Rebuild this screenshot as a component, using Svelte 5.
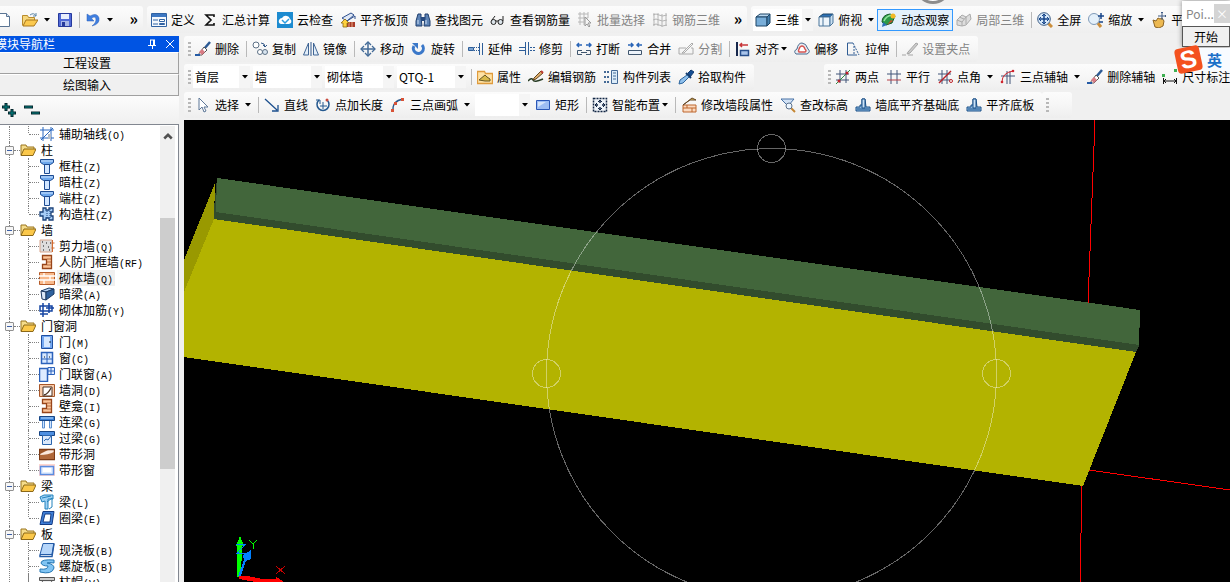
<script lang="ts">
  const icons: Record<string, string> = {
    doc: '<path d="M3.500 1.500h8l3 3v10h-11z" fill="#fff" stroke="#5b7594"/><path d="M11.500 1.500v3h3" fill="#dce8f5" stroke="#5b7594"/>',
    open: '<path d="M0.500 13.500v-10h5l1 2h6v3" fill="#f6d77c" stroke="#b98b2c"/><path d="M1 14l3-6h12l-4 6z" fill="#fbc94f" stroke="#a8771d"/><path d="M8 3q4-3 6 1m0-3v3h-3" fill="none" stroke="#5d87a8"/>',
    save: '<path d="M1.500 1.500h13v13h-13z" fill="#5069d6" stroke="#26399c"/><path d="M4 2h8v5H4z" fill="#e9effc"/><path d="M4 9h8v5H4z" fill="#a8b7e8"/><path d="M5 10h3v4H5z" fill="#26399c"/>',
    undo: '<path d="M2 2v7h7L6.500 6.500Q11 3 11 8q0 3-4 6 8-2 7-8-2-6-9-2z" fill="#3f7fe0" stroke="#2b5fb8" stroke-width=".5"/>',
    define: '<path d="M0.500 1.500h15v13h-15z" fill="#f4f8fd" stroke="#2f62a3"/><path d="M1 2h14v3H1z" fill="#3d77c2"/><path d="M2 8h5m-5 4h5" stroke="#2f62a3"/><path d="M8.500 7.500h5v2h-5zm0 4h5v1h-5z" fill="#fff" stroke="#2f62a3"/>',
    sigma: '<path d="M12 5V3H4l5 5-5 5h8v-2" fill="none" stroke="#111" stroke-width="1.600"/>',
    cloud: '<path d="M0 0h16v16H0z" fill="#1d8bd0"/><path d="M4 12q-3-1-2-4 1-2 3-2 2-3 5-2 2 0 3 3 2 1 1 4l-2 1z" fill="#fff"/><path d="M5 8l3 3 4-4" fill="none" stroke="#2c9de0" stroke-width="1.500"/>',
    slabtop: '<path d="M2 6l9-5 3 2-7 6z" fill="#dfe8f6" stroke="#2d4f8e"/><path d="M7 9l8-5v3" fill="none" stroke="#2d4f8e"/><path d="M7 10h8v5H7z" fill="#a83a28"/><path d="M9 10v5m3-5v5" stroke="#f8c49c" stroke-width=".8"/><path d="M5 7l4 4H7v4H3v-4H1z" fill="#ffd23e" stroke="#8b6912" stroke-width=".8"/>',
    find: '<path d="M3 2h3v4l1 8H1V9zm7 0h3l2 7v5H9l1-8z" fill="#5e84b6" stroke="#203f6e"/><path d="M6 5h4v4H6z" fill="#274a7f"/><path d="M3 8v4m8-4v4" stroke="#cfe0f5"/>',
    glasses: '<circle cx="3.500" cy="10" r="2.500" fill="#dbe4ea" stroke="#222"/><circle cx="10.500" cy="10" r="2.500" fill="#dbe4ea" stroke="#222"/><path d="M6 9h2M2 8l3-4m8 5V4" fill="none" stroke="#222"/>',
    batch: '<path d="M1 2h10M1 6h10M1 10h6M3 0v13M7 0v13M11 0v6" stroke="#b8b8b8"/><path d="M8 5v9l2-2 2 3 1-1-2-3h3z" fill="#f5f5f5" stroke="#999"/>',
    rebar3d: '<path d="M1 3q3-2 6 0t8 0M1 8q3-2 6 0t8 0M1 13q3-2 6 0t8 0M2 1v13M6 1v13M10 2v13M14 1v13" fill="none" stroke="#b4b4b4"/>',
    cube: '<path d="M1 5l4-3h10l-3 3z" fill="#b9d7ef" stroke="#1d4567"/><path d="M1 5h11v9H1z" fill="#79aed9" stroke="#1d4567"/><path d="M12 5l3-3v9l-3 3z" fill="#4682b0" stroke="#1d4567"/>',
    topview: '<path d="M1 5l4-3h10l-3 3z" fill="#2d71b7" stroke="#1d4567"/><path d="M1 5h11v9H1z" fill="#eef5fb" stroke="#48759b"/><path d="M12 5l3-3v9l-3 3zM5 5v9" fill="#cadff0" stroke="#48759b"/>',
    orbit: '<path d="M1 10q0-7 8-8l5 2-3 7-6 2z" fill="#2b9a48" stroke="#165b2a"/><path d="M3 9q2-5 8-6" stroke="#8ee59c" fill="none" stroke-width="1.500"/><circle cx="12" cy="4" r="2.500" fill="#f2b928"/><path d="M1 15l5-2-4-3z" fill="#2970b8"/><path d="M6 13l6-4-2-1z" fill="#c84d28"/>',
    local3d: '<path d="M1 8l5-5 4 2 4-3 1 5-5 6-4 1-5-1z" fill="#ddd" stroke="#aaa"/><path d="M1 8l5 2 4-5m-4 5v4m4-9v7M3 5l5 2" fill="none" stroke="#aaa"/>',
    full: '<path d="M10 10l5 5" stroke="#cb8e3b" stroke-width="3"/><circle cx="7" cy="7" r="6.300" fill="#d7e9fa" stroke="#3b5b84"/><path d="M7 2v10M2 7h10" stroke="#17458a" stroke-width="1.500"/><path d="M5 4l2-2 2 2M5 10l2 2 2-2M4 5L2 7l2 2m6-4l2 2-2 2" fill="none" stroke="#17458a"/>',
    zoom: '<path d="M9 10l4 5" stroke="#cb8e3b" stroke-width="3"/><circle cx="6" cy="7" r="5.500" fill="#e4f0fa" stroke="#7f9ab8"/><path d="M13 1v6m-3-3h6m-5 6h4" stroke="#17458a" stroke-width="1.500"/>',
    pan: '<path d="M2 8l3 1 2-3 2 1 2-1 2 3-1 5-4 2-4-1z" fill="#edb951" stroke="#8c6424"/><path d="M11 0v8M7 4h8M10 1l1-1 1 1m2 2l1 1-1 1" stroke="#3e5b85" fill="none"/>',
    erase: '<path d="M15 1L9 8" stroke="#2d5a94" stroke-width="2.500"/><path d="M9 6l3 3-5 5H3z" fill="#fff" stroke="#555"/><path d="M7 8l3 3-3 3-3-3z" fill="#d97b84"/><path d="M0 14h5" stroke="#245aa5" stroke-width="2"/>',
    copy: '<circle cx="4" cy="4" r="3" fill="#fff" stroke="#5d7186"/><circle cx="8" cy="11" r="2.500" fill="#fff" stroke="#5d7186"/><circle cx="13" cy="11" r="2.500" fill="#d8e4ef" stroke="#5d7186"/><path d="M9 2q4 0 4 4m-2-2l2 2 2-2" fill="none" stroke="#355a89"/>',
    mirror: '<path d="M5.500 2v12h-5zM10.500 2v12h5z" fill="#e3eef9" stroke="#416695"/><path d="M8 1v14" stroke="#31598d"/>',
    move: '<path d="M8 1v14M1 8h14" stroke="#426a97" stroke-width="1.500"/><path d="M5 4l3-3 3 3M5 12l3 3 3-3M4 5L1 8l3 3m8-6l3 3-3 3" fill="none" stroke="#426a97" stroke-width="1.300"/>',
    rotate: '<path d="M3 5a5 5 0 1 0 8-1" fill="none" stroke="#3b78c9" stroke-width="3"/><path d="M1 2h6v6z" fill="#3b78c9"/>',
    extend: '<path d="M0.500 6.500h5v3h-5zM11.500 2v12M14.500 2v12" fill="#7fa5d0" stroke="#2e5e99"/><path d="M6 6.500h5m-5 3h5" stroke="#2e5e99" stroke-dasharray="1 1"/>',
    trim: '<path d="M0 6.500h6m0 3H0M6.500 1v13M9.500 1v13" fill="none" stroke="#2e5e99"/><path d="M11 6.500h5m-5 3h5" stroke="#2e5e99" stroke-dasharray="2 1"/>',
    breakup: '<path d="M6 4H1m2-2L1 4l2 2m7-2h5m-2-2l2 2-2 2" fill="none" stroke="#2864b7" stroke-width="1.500"/><path d="M6 9.500H1.500v4H6m4-4h4.500v4H10M5 11.500h6" fill="none" stroke="#40566e"/>',
    merge: '<path d="M1 4h5M4 2l2 2-2 2m11-2h-5m2-2l-2 2 2 2" fill="none" stroke="#2864b7" stroke-width="1.500"/><path d="M1.500 9.500h13v4h-13z" fill="#eef4fb" stroke="#40566e"/>',
    split: '<path d="M1 7h7M1 13h14V7h-2M1 7v6M4 12L14 2l1 1L6 12z" fill="none" stroke="#aaa"/>',
    align: '<path d="M2 1v14" stroke="#17284c" stroke-width="2"/><path d="M5.500 9.500h8v5h-8z" fill="#a9c4eb" stroke="#284f8c" stroke-width="1.500"/><path d="M13 4H5m2-2L5 4l2 2" fill="none" stroke="#c73538" stroke-width="1.500"/>',
    offset: '<path d="M2 13q-3-3 1-5 1-6 5-6t6 6q3 3-1 5z" fill="#e9eef4" stroke="#4a6a8e"/><path d="M5 11q-1-1 0-3 1-3 3-3t3 3q2 2 0 3z" fill="#fff" stroke="#d65552" stroke-width="1.500"/>',
    stretch: '<path d="M8 2H2.500v12H12" fill="none" stroke="#305d94"/><path d="M8 2l6 12M9 5v9" stroke="#305d94" stroke-dasharray="2 1"/>',
    grip: '<path d="M6 11l8-9 2 1-8 9-3 1zM0 14h4m2 0h5" fill="#ccc" stroke="#a5a5a5"/>',
    props: '<path d="M0.500 14.500v-12h7l1 2h7v10z" fill="#ffe2a4" stroke="#df9b3d" stroke-width="1.300"/><path d="M2 11l6-5 2 2 3 2v2H8z" fill="#d8b94a" stroke="#665623"/>',
    editbar: '<path d="M0 12q4-4 5-1t10-1" fill="none" stroke="#273b24" stroke-width="1.500"/><path d="M6 9l7-7 2 2-7 6-3 1z" fill="#dfac6b" stroke="#61461f"/><path d="M13 2l2 2" stroke="#bd3a32" stroke-width="2"/>',
    list: '<path d="M1 3h2m1 0h2M1 8h2m1 0h2M1 13h2m1 0h2" stroke="#456a96" stroke-width="2"/><path d="M8.500 1.500h6v13h-6z" fill="#dcecf9" stroke="#456a96"/><path d="M10 4h3m-3 3h3m-3 3h3" stroke="#456a96"/>',
    pick: '<path d="M10 4l3-3 3 2-4 5z" fill="#164f94" stroke="#123c70"/><path d="M8 4l5 5" stroke="#123c70" stroke-width="2"/><path d="M9 6l2 2-6 6-4 1 1-4z" fill="#8fc0ec" stroke="#2b649c"/>',
    twopoint: '<path d="M1 5h13M1 11h13M5 1v13M11 1v13" stroke="#415578"/><path d="M1 15L15 1" stroke="#2e8d42"/><circle cx="4" cy="12" r="1.500" fill="#b92229"/><circle cx="12" cy="4" r="1.500" fill="#b92229"/>',
    parallel: '<path d="M1 5h14M5 1v14M11 1v14" stroke="#415578"/><path d="M1 11h14" stroke="#b63e46"/>',
    angle: '<path d="M1 5h13M1 11h13M5 1v14M10 1v14" stroke="#415578"/><path d="M2 14L14 2" stroke="#b92229" stroke-width="1.500"/><circle cx="14" cy="12" r="1.500" fill="#fff" stroke="#b92229"/>',
    arcaxis: '<path d="M1 7h14M7 2v13M10 2v13" stroke="#415578"/><path d="M2 13q0-9 11-11" fill="none" stroke="#cf252e"/><circle cx="2" cy="13" r="1.300" fill="#cf252e"/><circle cx="13" cy="2" r="1.300" fill="#cf252e"/>',
    dimension: '<path d="M1.500 9v6M14.500 9v6M2 12h12M4 10l-2 2 2 2m8-4l2 2-2 2" fill="none" stroke="#111"/><path d="M0 5h3v3H0zM12 0h3v3h-3z" fill="#3faf52"/>',
    select: '<path d="M4 1v12l3-3 2 5 2-1-2-4h4z" fill="#fff" stroke="#5d7797"/>',
    line: '<path d="M1 2l12 11m-5 1h6V8" fill="none" stroke="#1d508e" stroke-width="1.300"/>',
    pointlen: '<path d="M4 3a6 6 0 1 0 8 0" fill="none" stroke="#24588f" stroke-width="1.500"/><path d="M1 3h4v4M8 5v7M5 9h7" fill="none" stroke="#24588f"/><circle cx="12" cy="3" r="1.500" fill="#c94b3f"/>',
    arc: '<path d="M3 14Q2 4 13 2" fill="none" stroke="#2a5688" stroke-width="1.300"/><path d="M1 12h3v3H1zM4 5h3v3H4zM11 1h3v3h-3z" fill="#d85236"/>',
    rect: '<path d="M1.500 3.500h13v9h-13z" fill="#9dbdf3" stroke="#2b57b6"/><path d="M3 5h8l-8 5z" fill="#d5e4fb"/>',
    smart: '<path d="M1.500 1.500h13v13h-13z" fill="#eef3f9" stroke="#122644" stroke-width="1.500" stroke-dasharray="2 1"/><path d="M8 3v3m0 4v3M3 8h3m4 0h3" stroke="#122644" stroke-width="1.500"/><path d="M6 5l2-2 2 2M6 11l2 2 2-2M5 6L3 8l2 2m6-4l2 2-2 2" fill="none" stroke="#122644"/>',
    brickedit: '<path d="M2 8h13v7H2z" fill="#fbdac0" stroke="#bd672e"/><path d="M2 11h13M6 8v3m5 0v4" stroke="#bd672e"/><path d="M2 8l9-7 4 2H9z" fill="#f1d06b" stroke="#654827"/>',
    elevation: '<path d="M1 2h13L8 9z" fill="#d2e2f5" stroke="#4670a5"/><path d="M11 11l4 4" stroke="#c58633" stroke-width="2"/><circle cx="9" cy="9" r="3" fill="#edf6ff" stroke="#5c718b"/>',
    base: '<path d="M1 10h4V8h2V2h3l1 8h4v4H1z" fill="#8dbae2" stroke="#184f87"/><path d="M7 2h3v9H7zM2 12h12" fill="#c9e1f6" stroke="#184f87"/>',
    folder: '<path d="M1 13V3h5l1 2h7v2" fill="#f5dc8b" stroke="#9a751e"/><path d="M1 13.500L4 7h12l-3 6.500z" fill="#fbc84a" stroke="#8c6817"/>',
    axis: '<path d="M1 4h14M1 12h14M4 1v14M12 1v14M2 14L14 2" stroke="#2866bf"/><path d="M9 8h3v5H9z" fill="#b4bdc8"/>',
    column: '<path d="M1.500 1.500h13v3l-3 2h-7l-3-2z" fill="#6ca7ec" stroke="#1c4a91"/><path d="M5.500 6.500h5v9h-5z" fill="#d2e6ff" stroke="#1c4a91"/><path d="M2 3h12" stroke="#cfe5ff"/>',
    tiecolumn: '<path d="M4 2h3v2h3V2h4v4h-2v4h2v4h-4v-2H7v2H4v-4H1V6h3z" fill="#a7cdf7" stroke="#1b4279" stroke-width="1.300"/><path d="M8 5v7M11 3v10" stroke="#1b4279" stroke-dasharray="1 1"/>',
    shear: '<path d="M1 2h12v12H1z" fill="#ddd" stroke="#d9a58c"/><path d="M3 4h1m3 1h1m3 0h1M4 8h1m4 1h1m-6 3h1m5 0h1" stroke="#555" stroke-width="1.500"/><path d="M13.500 2v12m-1-9h3m-3 5h3" stroke="#d06b31"/>',
    frame: '<path d="M3.500 1.500h9v13h-9v-4h4v-5h-4z" fill="#fbc59a" stroke="#98451a" stroke-width="1.300"/><path d="M8 5h4m-4 3h4m-4 3h4" stroke="#98451a" stroke-width=".7"/>',
    brick: '<path d="M0.500 2.500h15v12h-15z" fill="#f8b98b" stroke="#b55b28"/><path d="M0 6h16M0 10h16M5 3v3m6 0v4M5 10v4" stroke="#fff" stroke-width="1.300"/>',
    hidbeam: '<path d="M2 5l8-3 5 1-8 3z" fill="#b5d4f5" stroke="#1b3961"/><path d="M2 5l5 1v8l-4-1z" fill="#dce9f8" stroke="#1b3961"/><path d="M7 6l8-3v5l-8 6z" fill="#2f629e" stroke="#1b3961"/>',
    brickbar: '<path d="M1 4h12v5H1zM4 1v14M10 1v10M1 12h8M7 6h8" fill="none" stroke="#1645a3" stroke-width="1.500"/>',
    door: '<path d="M2.500 1.500h11v13h-11z" fill="#75a8f0" stroke="#1f4fa0"/><path d="M5 3h6v10H5z" fill="#d6e8ff"/><path d="M10 8h2" stroke="#123"/>',
    window: '<path d="M2.500 2.500h11v11h-11z" fill="#d7e8ff" stroke="#2c62bb" stroke-width="1.500"/><path d="M8 2v12M3 9h11" stroke="#2c62bb"/><path d="M5 7h1m4 0h1" stroke="#111"/>',
    doorwin: '<path d="M0.500 2.500h8v13h-8z" fill="#dfecff" stroke="#2c62bb" stroke-width="1.500"/><path d="M9 1.500h6.500v7H9zM9 5h7m-4-4v8" fill="#dfecff" stroke="#2c62bb"/>',
    hole: '<path d="M0.500 2.500h15v12h-15z" fill="#f8c9a8" stroke="#a75629"/><path d="M4 14V5h9v9z" fill="#fff" stroke="#4c3325"/><path d="M5 13q4-1 7-7" fill="none" stroke="#4c3325" stroke-width="1.300"/>',
    linkbeam: '<path d="M0.500 2.500h15v4h-15z" fill="#3981d8" stroke="#174584"/><path d="M3.500 7v7h2V7m5 0v7h2V7" fill="#d2e6ff" stroke="#5b8fd0"/><path d="M2 4h12" stroke="#bcdcff"/>',
    lintel: '<path d="M0.500 1.500h15v4h-15z" fill="#4d8fe1" stroke="#174584"/><path d="M3.500 5.500h9v9h-9z" fill="#dbe9fb" stroke="#2b65ad"/><path d="M5 11l2-2 2 1 3-4" fill="none" stroke="#2b65ad"/>',
    stripHole: '<path d="M0.500 3.500h15v10h-15z" fill="#fbe9dd" stroke="#7d3b16" stroke-width="1.500"/><path d="M1 9q8 0 14-3v7H1z" fill="#b0683a"/><path d="M1 4h8l-8 4z" fill="#9c5528"/>',
    stripWin: '<path d="M0 2h16v12H0z" fill="#ffd6cf"/><path d="M1.500 4.500h13v8h-13z" fill="#e0edff" stroke="#5b8ce0" stroke-width="1.500"/><path d="M4 6h8v4H4z" fill="#fff"/>',
    beam: '<path d="M1 3l4-2h9v4H9v10H6V7L3 8z" fill="#9ed1f4" stroke="#2382bc"/><path d="M3 4l9-2M8 8l5-4v9l-3 2" fill="none" stroke="#2382bc"/>',
    ringbeam: '<path d="M4 1.500h11l-2 13H1z" fill="#3f7ed6" stroke="#153c84"/><path d="M6 4h6l-1 8H4z" fill="#fff" stroke="#153c84"/>',
    slab: '<path d="M4 1.500h11l-2 11H1z" fill="#b6d6fa" stroke="#245ba6"/><path d="M1 12.500v2h12l2-13" fill="none" stroke="#245ba6" stroke-width="1.500"/>',
    spiral: '<path d="M15 2Q2 1 2 5q1 3 7 3 0 4-8 3v3q12 3 14-4 0-4-7-5 1-1 7 0z" fill="#80c4f3" stroke="#2577b4"/>',
    cap: '<path d="M0.500 3.500h15v3h-15z" fill="#ccc" stroke="#555"/><path d="M3 7l3 4h4l3-4" fill="#eee" stroke="#666"/>',
  };

  const sep = { sep: true };

  const commonTools = [
    { icon: 'define', label: '定义' },
    { icon: 'sigma', label: '汇总计算' },
    { icon: 'cloud', label: '云检查' },
    { icon: 'slabtop', label: '平齐板顶' },
    { icon: 'find', label: '查找图元' },
    { icon: 'glasses', label: '查看钢筋量' },
    { icon: 'batch', label: '批量选择', disabled: true },
    { icon: 'rebar3d', label: '钢筋三维', disabled: true },
  ];

  const viewTools = [
    { combo: '三维', icon: 'cube', width: 60 },
    { icon: 'topview', label: '俯视', arrow: 'wide' },
    { icon: 'orbit', label: '动态观察', active: true },
    { icon: 'local3d', label: '局部三维', disabled: true },
    sep,
    { icon: 'full', label: '全屏' },
    { icon: 'zoom', label: '缩放', arrow: 'wide' },
    { icon: 'pan', label: '平移' },
  ];

  const editTools = [
    { icon: 'erase', label: '删除' },
    sep,
    { icon: 'copy', label: '复制' },
    { icon: 'mirror', label: '镜像' },
    sep,
    { icon: 'move', label: '移动' },
    { icon: 'rotate', label: '旋转' },
    sep,
    { icon: 'extend', label: '延伸' },
    { icon: 'trim', label: '修剪' },
    sep,
    { icon: 'breakup', label: '打断' },
    { icon: 'merge', label: '合并' },
    { icon: 'split', label: '分割', disabled: true },
    sep,
    { icon: 'align', label: '对齐', arrow: 'tight' },
    { icon: 'offset', label: '偏移' },
    { icon: 'stretch', label: '拉伸' },
    sep,
    { icon: 'grip', label: '设置夹点', disabled: true },
  ];

  const memberTools = [
    { combo: '首层', name: '楼层', width: 57 },
    { combo: '墙', name: '构件类型', width: 69 },
    { combo: '砌体墙', name: '构件种类', width: 69 },
    { combo: 'QTQ-1', name: '构件', width: 69 },
    sep,
    { icon: 'props', label: '属性' },
    { icon: 'editbar', label: '编辑钢筋' },
    { icon: 'list', label: '构件列表' },
    { icon: 'pick', label: '拾取构件' },
  ];

  const axisTools = [
    { icon: 'twopoint', label: '两点' },
    { icon: 'parallel', label: '平行' },
    { icon: 'angle', label: '点角', arrow: 'wide' },
    { icon: 'arcaxis', label: '三点辅轴', arrow: 'wide' },
    { icon: 'erase', label: '删除辅轴' },
    { icon: 'dimension', label: '尺寸标注' },
  ];

  const drawTools = [
    { icon: 'select', label: '选择', arrow: 'wide' },
    sep,
    { icon: 'line', label: '直线' },
    { icon: 'pointlen', label: '点加长度' },
    { icon: 'arc', label: '三点画弧', arrow: 'wide' },
    { combo: '', name: '画弧方式', width: 55 },
    { icon: 'rect', label: '矩形' },
    sep,
    { icon: 'smart', label: '智能布置', arrow: 'tight' },
    sep,
    { icon: 'brickedit', label: '修改墙段属性' },
    { icon: 'elevation', label: '查改标高' },
    { icon: 'base', label: '墙底平齐基础底' },
    { icon: 'base', label: '平齐底板' },
  ];

  const tree = [
    { children: [['axis', '辅助轴线', '(O)']] },
    {
      name: '柱',
      children: [
        ['column', '框柱', '(Z)'],
        ['column', '暗柱', '(Z)'],
        ['column', '端柱', '(Z)'],
        ['tiecolumn', '构造柱', '(Z)'],
      ],
    },
    {
      name: '墙',
      children: [
        ['shear', '剪力墙', '(Q)'],
        ['frame', '人防门框墙', '(RF)'],
        ['brick', '砌体墙', '(Q)'],
        ['hidbeam', '暗梁', '(A)'],
        ['brickbar', '砌体加筋', '(Y)'],
      ],
    },
    {
      name: '门窗洞',
      children: [
        ['door', '门', '(M)'],
        ['window', '窗', '(C)'],
        ['doorwin', '门联窗', '(A)'],
        ['hole', '墙洞', '(D)'],
        ['frame', '壁龛', '(I)'],
        ['linkbeam', '连梁', '(G)'],
        ['lintel', '过梁', '(G)'],
        ['stripHole', '带形洞', ''],
        ['stripWin', '带形窗', ''],
      ],
    },
    {
      name: '梁',
      children: [
        ['beam', '梁', '(L)'],
        ['ringbeam', '圈梁', '(E)'],
      ],
    },
    {
      name: '板',
      children: [
        ['slab', '现浇板', '(B)'],
        ['spiral', '螺旋板', '(B)'],
        ['cap', '柱帽', '(V)'],
      ],
    },
  ];

  let selected = $state('砌体墙');
</script>

{#snippet icon(name)}
  <svg class="icon" viewBox="0 0 16 16" aria-hidden="true">{@html icons[name]}</svg>
{/snippet}

{#snippet arrow(kind)}
  <svg class="arrow {kind}" viewBox="0 0 6 4" aria-hidden="true"><path d="M0 0h6L3 3.500z" /></svg>
{/snippet}

{#snippet tools(items)}
  {#each items as item}
    {#if item.sep}
      <span class="sep"></span>
    {:else if item.combo !== undefined}
      <span class="combo" style="width: {item.width}px">
        {#if item.icon}{@render icon(item.icon)}{/if}
        <select aria-label={item.name ?? '视图'}>
          <option>{item.combo}</option>
        </select>
        <span class="combo-arrow">{@render arrow('')}</span>
      </span>
    {:else}
      <button type="button" class="tool" class:active={item.active} disabled={item.disabled}>
        {@render icon(item.icon)}{item.label}{#if item.arrow}{@render arrow(item.arrow)}{/if}
      </button>
    {/if}
  {/each}
{/snippet}

<div class="app">
  <header class="top">
    <div class="bar file">
      <button type="button" class="tool" aria-label="新建">{@render icon('doc')}</button>
      <button type="button" class="tool" aria-label="打开">{@render icon('open')}{@render arrow('tight')}</button>
      <button type="button" class="tool last" aria-label="保存">{@render icon('save')}</button>
      <span class="sep"></span>
      <button type="button" class="tool" aria-label="撤销">{@render icon('undo')}{@render arrow('tight')}</button>
      <button type="button" class="more">»</button>
    </div>
    <div class="bar">
      {@render tools(commonTools)}
      <button type="button" class="more">»</button>
    </div>
    <div class="bar grow">{@render tools(viewTools)}</div>
  </header>

  <div class="body">
    <aside class="sidebar">
      <div class="title">
        <span>模块导航栏</span>
        <button type="button" aria-label="固定">
          <svg viewBox="0 0 10 10"><path d="M3 1h5M3.500 1v5M6.500 1v5M7.500 1v5M1 6.500h8M5.500 7v3" /></svg>
        </button>
        <button type="button" aria-label="关闭">
          <svg viewBox="0 0 10 10"><path d="M1 1l8 8M9 1L1 9" /></svg>
        </button>
      </div>
      <button type="button" class="section">工程设置</button>
      <button type="button" class="section">绘图输入</button>
      <div class="expand">
        <button type="button" aria-label="全部展开">
          <svg viewBox="0 0 16 16"><path d="M1 5h8M5 1v8M7 11h8M11 7v8" class="edge" /><path d="M2 5h6M5 2v6M8 11h6M11 8v6" /></svg>
        </button>
        <button type="button" aria-label="全部折叠">
          <svg viewBox="0 0 16 16"><path d="M0 5h9M7 11h9" class="edge" /><path d="M1 5h7M8 11h7" /></svg>
        </button>
      </div>
      <div class="tree-box">
        <ul class="tree">
          {#each tree as group, g}
            <li class="group" class:final={g === tree.length - 1}>
              {#if group.name}
                <div class="node">
                  <button type="button" class="toggle" aria-label="折叠{group.name}"></button>
                  <span class="dots"></span>
                  {@render icon('folder')}
                  <span class="name">{group.name}</span>
                </div>
              {/if}
              <ul>
                {#each group.children as [glyph, name, key]}
                  <li class="leaf">
                    <button type="button" onclick={() => (selected = name)}>
                      <span class="dots"></span>
                      {@render icon(glyph)}
                      <span class="name" class:selected={selected === name}>{name}<span class="key">{key}</span></span>
                    </button>
                  </li>
                {/each}
              </ul>
            </li>
          {/each}
        </ul>
        <div class="scrollbar">
          <svg viewBox="0 0 8 6"><path d="M1 5l3-3 3 3" /></svg>
          <div class="thumb"></div>
        </div>
      </div>
    </aside>

    <main>
      <div class="row">
        <div class="bar"><span class="grip"></span>{@render tools(editTools)}</div>
      </div>
      <div class="row spread">
        <div class="bar"><span class="grip"></span>{@render tools(memberTools)}</div>
        <div class="bar"><span class="grip"></span>{@render tools(axisTools)}</div>
      </div>
      <div class="row">
        <div class="bar"><span class="grip"></span>{@render tools(drawTools)}</div>
        <div class="bar empty"><span class="grip"></span></div>
      </div>

      <svg class="scene" viewBox="184 120 1046 462" preserveAspectRatio="xMinYMin slice" shape-rendering="crispEdges">
        <path d="M1095 120L1088 304M1082 486L1080 582M1089 470L1230 490" stroke="#f00" fill="none" />
        <path d="M217 178L1140 310L1139 346L1136 352L213 219z" fill="#324c2d" />
        <path d="M217 178L1140 310L1139 345L216 212z" fill="#42663b" />
        <path d="M215 183L214 219L184 293V260z" fill="#999900" />
        <path d="M214 219L1136 352L1083 486L184 357V292z" fill="#b3b300" />
        <g class="orbit">
          <circle cx="771.5" cy="373.5" r="225" />
          <circle cx="771.5" cy="148.5" r="14" />
          <circle cx="546.5" cy="373.5" r="14" />
          <circle cx="996.5" cy="373.5" r="14" />
        </g>
        <path d="M237 577V546h-1l4-10 4 10h-2l-1 31z" fill="#0f0" />
        <path d="M238 576l6-16-1-5 8-5v9l-5 2-5 15z" fill="#0080ff" />
        <path d="M236 544.500h9l-8 9h9" stroke="#0080ff" fill="none" />
        <path d="M239 576h8l15 3h14v-2l7 4v1h-27l-17-3z" fill="#f00" />
        <path d="M249 540l4 4 4-4M253.500 544v5" stroke="#0f0" fill="none" />
        <path d="M276 566l9 8M285 566l-9 8" stroke="#c00" fill="none" />
      </svg>
    </main>
  </div>

  <div class="knob"></div>
  <div class="popup">
    <div class="popup-title"><span>Poi...</span><button type="button" aria-label="关闭">×</button></div>
    <button type="button" class="start">开始</button>
  </div>
  <div class="ime"><span class="logo">S</span><span class="lang">英</span></div>
</div>

<style>
:global(body) {
  margin: 0;
  overflow: hidden;
  background: #f0f0f0;
}
.app {
  position: relative;
  display: flex;
  flex-direction: column;
  height: 100vh;
  overflow: hidden;
  font: 12px/16px "Noto Sans CJK SC", sans-serif;
  color: #000;
}
button, select {
  font: inherit;
  color: inherit;
  background: none;
  border: none;
  padding: 0;
  margin: 0;
}
ul {
  list-style: none;
  margin: 0;
  padding: 0;
}
.top {
  display: flex;
  gap: 4px;
  height: 27px;
  padding: 6px 0 3px;
}
.bar {
  display: flex;
  flex: none;
  align-items: center;
  height: 100%;
  box-sizing: border-box;
  padding: 0 1px 0 4px;
  border-radius: 3px;
  background: linear-gradient(#fcfcfc, #f6f6f6 50%, #eeeeee);
}
.bar.file {
  width: 148px;
  margin-left: -5px;
  padding-left: 0;
}
.bar.grow {
  flex: 1 0 auto;
}
.bar.empty {
  width: 30px;
}
.tool {
  display: flex;
  flex: none;
  align-items: center;
  height: 22px;
  margin-right: 7px;
  white-space: nowrap;
}
.tool.last {
  margin-right: 2px;
}
.tool:disabled {
  color: #838383;
}
.tool.active {
  margin: 0 3px 0 -4px;
  padding: 0 3px;
  border: 1px solid #3399ff;
  background: #e3f0fb;
}
.icon {
  flex: none;
  width: 16px;
  height: 16px;
}
.bar .icon {
  margin-right: 4px;
}
.arrow {
  flex: none;
  width: 6px;
  height: 4px;
}
.arrow.wide {
  margin-left: 6px;
}
.arrow.tight {
  margin-left: 2px;
}
.sep {
  flex: none;
  width: 1px;
  height: 16px;
  margin-right: 5px;
  background: #b9b9b9;
}
.grip {
  flex: none;
  width: 3px;
  height: 15px;
  margin-right: 4px;
  background: repeating-linear-gradient(#b8b8b8 0 2px, transparent 2px 4px);
}
.combo {
  display: flex;
  flex: none;
  align-items: center;
  box-sizing: border-box;
  height: 22px;
  margin: 0 5px 0 -2px;
  padding-left: 2px;
  background: #fff;
}
.combo select {
  flex: 1;
  min-width: 0;
  appearance: none;
  outline: none;
}
.combo-arrow {
  display: flex;
  align-items: center;
  justify-content: center;
  width: 11px;
  height: 100%;
  background: #f5f5f5;
}
.more {
  width: 19px;
  height: 24px;
  margin-left: auto;
  font-size: 16px;
  font-weight: bold;
  line-height: 12px;
  text-align: right;
  padding-right: 4px;
  align-self: flex-start;
}
.body {
  display: flex;
  flex: 1;
  min-height: 0;
}
.sidebar {
  display: flex;
  flex: none;
  flex-direction: column;
  width: 184px;
  margin: 0 5px 0 -5px;
}
.title {
  display: flex;
  flex: none;
  align-items: center;
  gap: 8px;
  height: 16px;
  padding-right: 4px;
  background: #0054e3;
  color: #fff;
}
.title span {
  flex: 1;
}
.title button {
  display: flex;
}
.title svg {
  width: 10px;
  height: 10px;
  fill: none;
  stroke: #fff;
}
.section {
  height: 22px;
  flex: none;
  padding-right: 10px;
  border: 1px solid #a0a0a0;
  border-top-color: #fff;
  background: #f0f0f0;
}
.section {
  padding-right: 0;
}
.expand {
  display: flex;
  flex: none;
  align-items: center;
  gap: 7px;
  height: 28px;
  padding-left: 6px;
  background: linear-gradient(#fcfcfc, #f0f0f0);
}
.expand button {
  display: flex;
}
.expand svg {
  width: 16px;
  height: 16px;
  fill: none;
  stroke: #008080;
  stroke-width: 1;
}
.expand .edge {
  stroke: #06282e;
  stroke-width: 3;
}
.tree-box {
  display: flex;
  flex: 1;
  min-height: 0;
  border: 1px solid #828790;
  border-width: 1px 1px 0 0;
  padding: 1px 3px 0 9px;
  background: #fff;
}
.tree {
  flex: 1;
  padding-left: 5px;
  overflow: hidden;
}
.group {
  border-left: 1px dotted #808080;
}
.group ul {
  margin-left: 18px;
}
.node {
  display: flex;
  align-items: center;
  height: 16px;
  margin-left: -5px;
}
.toggle {
  box-sizing: border-box;
  width: 9px;
  height: 9px;
  border: 1px solid #919191;
  border-radius: 1px;
  background: linear-gradient(#3c5fa5, #3c5fa5) center / 5px 1px no-repeat #f6f6f6;
}
.dots {
  width: 6px;
  border-top: 1px dotted #808080;
}
.node .name {
  margin-left: 5px;
}
.leaf {
  height: 16px;
  border-left: 1px dotted #808080;
}
.leaf:last-child {
  border-color: transparent;
  background: repeating-linear-gradient(#808080 0 1px, transparent 1px 2px) 0 0 / 1px 8px no-repeat border-box;
}
.group.final .leaf:last-child {
  border-color: #808080;
}
.leaf button {
  display: flex;
  align-items: center;
  height: 16px;
  white-space: nowrap;
}
.leaf .dots {
  width: 10px;
}
.leaf .name {
  margin-left: 2px;
  padding: 0 2px;
}
.leaf .name.selected {
  background: #f0f0f0;
}
.key {
  font: 10px/10px "Liberation Mono", monospace;
}
.scrollbar {
  flex: none;
  width: 15px;
  background: #f0f0f0;
}
.scrollbar svg {
  display: block;
  width: 10px;
  height: 8px;
  margin: 6px auto 0;
  fill: none;
  stroke: #505050;
  stroke-width: 2;
}
.thumb {
  height: 55%;
  margin-top: 78px;
  background: #cdcdcd;
}
main {
  display: flex;
  flex: 1;
  flex-direction: column;
  gap: 2px;
  min-width: 0;
  overflow: hidden;
}
.row {
  display: flex;
  flex: none;
  height: 26px;
}
.row.spread {
  gap: 70px;
}
.scene {
  display: block;
  flex: 1;
  width: 100%;
  min-height: 0;
  background: #000;
}
.orbit circle {
  fill: none;
  stroke: #fff;
  stroke-opacity: 0.4;
}
.knob {
  position: absolute;
  top: -32px;
  right: 279px;
  width: 30px;
  height: 30px;
  border: 3px solid #8c8c8c;
  border-radius: 50%;
  background: #fff;
}
.popup {
  position: absolute;
  top: 1px;
  right: 0;
  width: 48px;
  background: #fff;
  box-shadow: 0 0 5px #888;
}
.popup-title {
  display: flex;
  align-items: center;
  height: 25px;
  padding-left: 4px;
  font-size: 12px;
  color: #888;
}
.popup-title span {
  flex: 1;
}
.popup-title button {
  width: 16px;
  height: 19px;
  background: #d4d4d4;
  color: #fff;
}
.start {
  display: block;
  width: 100%;
  height: 21px;
  border: 1px solid #555;
  background: #f0f0f0;
}
.ime {
  position: absolute;
  top: 48px;
  right: 0;
  display: flex;
  align-items: center;
  gap: 6px;
  width: 54px;
  height: 23px;
  background: linear-gradient(90deg, transparent 20px, #f8fbff 20px);
}
.logo {
  flex: none;
  width: 25px;
  height: 25px;
  border-radius: 4px;
  background: #f4511e;
  color: #fff;
  font: bold 25px/25px "Liberation Sans", sans-serif;
  text-align: center;
  transform: rotate(-12deg);
}
.lang {
  font-size: 15px;
  font-weight: bold;
  color: #1b6fc8;
}
</style>
